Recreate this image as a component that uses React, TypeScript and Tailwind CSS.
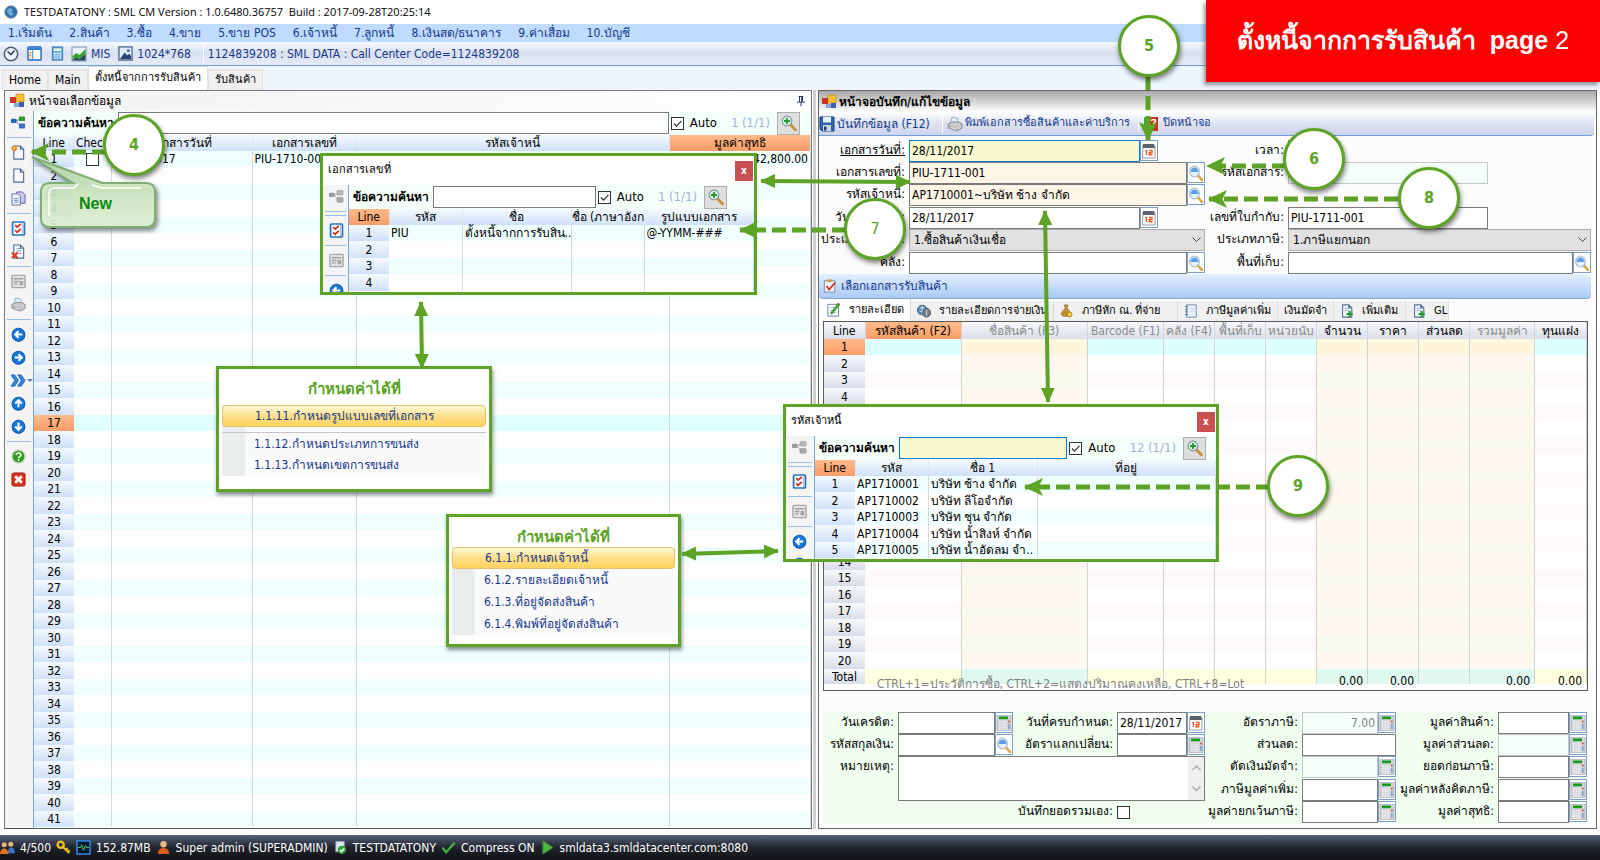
import type { ReactNode } from "react";

type IconName = keyof typeof ICONS;

const arrowDisc = (d: string) => (
  <>
    <circle cx="8" cy="8.4" r="7.2" fill="#0b4fa8" />
    <circle cx="8" cy="8" r="6.8" fill="#1878d8" stroke="#0d57b0" strokeWidth=".8" />
    <path d={d} fill="none" stroke="#fff" strokeWidth="2.2" />
  </>
);

const sheet = <path d="M3 1h7l3.5 3.5V15H3z M10 1v3.5h3.5" fill="#f7fbff" stroke="#4f6c98" strokeWidth="1.200" />;

const ICONS = {
  globe: (
    <>
      <circle cx="8" cy="8" r="7" fill="#2c6ea8" stroke="#5b7894" />
      <path d="M4 5l3-2 3 2-1 3 2 2-3 3-3-3-2-2z" fill="#6fa9d3" />
    </>
  ),
  clock: (
    <>
      <circle cx="8" cy="8" r="6.700" fill="#eef4fb" stroke="#4c5d73" strokeWidth="1.500" />
      <path d="M4.500 5.500L8 8.500l3.500-4" fill="none" stroke="#222f42" strokeWidth="1.300" />
    </>
  ),
  layout: (
    <>
      <rect x="1" y="1" width="14" height="14" rx="1" fill="#fff" stroke="#1b6ac2" strokeWidth="1.500" />
      <path d="M1 3h14" stroke="#2b83dc" strokeWidth="2.500" />
      <path d="M6 4v11" stroke="#2b83dc" />
      <path d="M3.500 6v7" stroke="#f08a24" strokeWidth="2" strokeDasharray="2 1" />
    </>
  ),
  bluecalc: (
    <>
      <rect x="2.500" y="1" width="11" height="14" fill="#5ba5df" stroke="#2f77b8" />
      <rect x="4" y="2.500" width="8" height="3" fill="#dff2d8" />
      <path d="M4 8h8M4 10.500h8M4 13h8" stroke="#fff" strokeWidth="1.400" strokeDasharray="2 1" />
    </>
  ),
  chart: (
    <>
      <rect x="1" y="1" width="14" height="14" fill="#e9f3fb" stroke="#7c93ab" />
      <path d="M1.500 10l4-3 3 2 6-6v5l-6 5-3-2-4 3z" fill="#35a52c" />
      <path d="M1.500 14l4-3 3 2 6-5v6.500h-13z" fill="#27465e" />
    </>
  ),
  picture: (
    <>
      <rect x="1" y="1" width="14" height="14" fill="#dfeaf7" stroke="#566f95" strokeWidth="1.500" />
      <path d="M2 14l5-7 3 3 2-2 2 3v3z" fill="#2c4677" />
      <circle cx="11" cy="5" r="1.500" fill="#3a5b94" />
    </>
  ),
  form: (
    <>
      <path d="M7 1h8v8H7z" fill="#f6bf35" stroke="#c98912" strokeWidth=".7" />
      <path d="M1 4h6v6H1z" fill="#cc3425" />
      <path d="M5 10h5v4H5z" fill="#8ca5d8" />
      <path d="M10 9h5v5h-5z" fill="#3c61b4" />
    </>
  ),
  tree: (
    <>
      <path d="M6 6l5-2M6 7l4 5" stroke="#7b8490" />
      <rect x="0" y="4" width="6" height="4.500" rx="1" fill="#2466b8" />
      <rect x="8.500" y="1.500" width="6.500" height="5" rx="1" fill="#2f9a36" />
      <rect x="8.500" y="9" width="6.500" height="5.500" rx="1" fill="#3c6fc0" />
    </>
  ),
  treeOff: (
    <>
      <path d="M6 6l5-2M6 7l4 5" stroke="#a4a4a4" />
      <rect x="0" y="4" width="6" height="4.500" rx="1" fill="#9c9c9c" />
      <rect x="8.500" y="1.500" width="6.500" height="5" rx="1" fill="#b9b9b9" stroke="#999" strokeWidth=".6" />
      <rect x="8.500" y="9" width="6.500" height="5" rx="1" fill="#aaa" stroke="#8f8f8f" strokeWidth=".6" />
    </>
  ),
  docNew: (
    <>
      {sheet}
      <circle cx="3.500" cy="3.500" r="3" fill="#f5872c" />
      <circle cx="3.500" cy="3.500" r="1.200" fill="#ffe28a" />
    </>
  ),
  doc: sheet,
  copy: (
    <>
      <path d="M6 1h6l3 3v9H6z" fill="#cfc4ee" stroke="#6a57a8" />
      <path d="M1 3h6l3 3v9H1z" fill="#eef3fc" stroke="#59719f" />
      <path d="M3 8h5M3 10h5M3 12h5" stroke="#7b93bd" />
    </>
  ),
  checks: (
    <>
      <rect x="1.500" y="1" width="13" height="14" rx="1" fill="#a9d0f2" stroke="#2c74b4" strokeWidth="1.500" />
      <rect x="3.500" y="2" width="8" height="12" fill="#fff" />
      <path d="M4.500 4.500l2 2 4-3.500M4.500 10l2 2 4-3.500" fill="none" stroke="#d4281c" strokeWidth="1.800" />
    </>
  ),
  docDelete: (
    <>
      {sheet}
      <path d="M6 5h4M6 7.500h5M8 10h3" stroke="#7f98bd" />
      <path d="M1 9l6 6M7 9l-6 6" stroke="#dd3a1e" strokeWidth="2.400" />
    </>
  ),
  panelOff: (
    <>
      <rect x="1" y="1.500" width="14" height="13" rx="1" fill="#e4e4e4" stroke="#a6a6a6" strokeWidth="1.500" />
      <path d="M3 5h10M3 8h5M3 10.500h4" stroke="#9f9f9f" strokeWidth="1.500" />
      <rect x="9" y="7.500" width="4" height="4.500" fill="#a5a5a5" />
    </>
  ),
  printer: (
    <>
      <path d="M5 1l6 1.500L10 8H3z" fill="#dff0fb" stroke="#8aa0b4" strokeWidth=".8" />
      <path d="M1 8l4-2h7l3 2v4l-5 3-9-3z" fill="#c9cbce" stroke="#72767c" strokeWidth=".8" />
      <path d="M1 9l9 3v3l-9-3z" fill="#a9acb1" />
      <path d="M4 11.500l5 1.500" stroke="#f6f6f6" />
    </>
  ),
  left: arrowDisc("M12 8H5M8 4.500L4.500 8 8 11.500"),
  right: arrowDisc("M4 8h7M8 4.500L11.500 8 8 11.500"),
  up: arrowDisc("M8 12V5M4.500 8L8 4.500 11.500 8"),
  down: arrowDisc("M8 4v7M4.500 8L8 11.500 11.500 8"),
  forward: (
    <path d="M0 2h4l4 6-4 6H0l4-6zM7 2h4l4 6-4 6H7l4-6z" fill="#2f86dc" stroke="#1b5fae" strokeWidth=".8" />
  ),
  help: (
    <>
      <circle cx="8" cy="8" r="7" fill="#2f9c20" stroke="#c9d9c5" strokeWidth="1.500" />
      <path d="M5.500 6.500c0-3 5-3 5 0 0 1.700-2.500 1.500-2.500 3.300M8 11v1.800" fill="none" stroke="#fff" strokeWidth="1.700" />
    </>
  ),
  close: (
    <>
      <rect x="1" y="1" width="14" height="14" rx="2" fill="#d8301c" stroke="#9e1c0c" />
      <path d="M4.500 4.500l7 7M11.500 4.500l-7 7" stroke="#fff" strokeWidth="3" />
    </>
  ),
  find: (
    <>
      <path d="M10 10.500l4 4.500" stroke="#dca73c" strokeWidth="2.600" strokeLinecap="round" />
      <ellipse cx="6.500" cy="6.500" rx="4.800" ry="5.500" fill="#e3f2fc" stroke="#a9b8c6" strokeWidth="1.200" />
      <path d="M2.700 7a3.800 4.500 0 0 1 7.600 0z" fill="#5d9fe6" />
    </>
  ),
  findPlus: (
    <>
      <path d="M9 9l5.500 6" stroke="#c9923a" strokeWidth="2.800" strokeLinecap="round" />
      <circle cx="6" cy="6" r="4.800" fill="#dff3e4" stroke="#7f97a4" strokeWidth="1.200" />
      <path d="M6 3v6M3 6h6" stroke="#1f9a2b" strokeWidth="1.800" />
    </>
  ),
  calendar: (
    <>
      <path d="M2 2l12 1v12H1.500z" fill="#fff" stroke="#8f9aa8" />
      <path d="M2 1h11l1 4H2z" fill="#5b626c" />
      <path d="M5.500 7v5M4.300 8.200l1.200-1.200M8 7.500h3v2.200H8.200v2h3.300" fill="none" stroke="#f05a28" strokeWidth="1.400" />
    </>
  ),
  calculator: (
    <>
      <rect x="1" y="0" width="14" height="16" fill="#d3d5d8" stroke="#aab0b8" />
      <rect x="3" y="1.500" width="9" height="2.700" fill="#159a1e" />
      <path d="M3 7h8M3 9.500h8M3 12h8M3 14.300h8" stroke="#f1f2f3" strokeWidth="1.300" strokeDasharray="1.600 1" />
      <path d="M12.800 9v5" stroke="#7f9bd0" strokeWidth="1.500" />
      <circle cx="12.800" cy="6.500" r=".9" fill="#e03c2c" />
    </>
  ),
  save: (
    <>
      <path d="M1 1h14v14H3l-2-2z" fill="#2c63b4" stroke="#1c3f7c" />
      <rect x="4" y="1" width="8" height="5.500" fill="#e6f1fb" />
      <rect x="4" y="9" width="8" height="6" fill="#cdd8e4" />
      <rect x="5" y="10.500" width="2.500" height="4" fill="#1c3f7c" />
    </>
  ),
  exit: (
    <>
      <path d="M1 1l5 2v12l-5-2z" fill="#39a23d" />
      <rect x="5" y="1" width="10" height="14" fill="#c8321e" />
      <path d="M8.500 5c0-2 4-2 4 0 0 1.500-2 1.500-2 3M10.500 10v2" stroke="#fff" fill="none" strokeWidth="1.500" />
    </>
  ),
  task: (
    <>
      <rect x="1.500" y="2" width="12" height="13" fill="#eaf0fa" stroke="#6d83ac" />
      <rect x="4.500" y=".5" width="6" height="3" fill="#c99a45" />
      <path d="M4 8l3 4 7-8" fill="none" stroke="#d8321e" strokeWidth="2" />
    </>
  ),
  edit: (
    <>
      <rect x="1" y="1.500" width="12" height="13.500" fill="#fff" stroke="#5f7898" />
      <path d="M3 5h6M3 8h4M3 11h8" stroke="#9fb3cc" />
      <path d="M14.500 2L7 11.500 4.500 13 5 10 12.500.5z" fill="#3fae35" stroke="#1f7a1c" strokeWidth=".6" />
      <path d="M12.500.5l2 1.500" stroke="#d8321e" strokeWidth="1.500" />
    </>
  ),
  money: (
    <>
      <circle cx="6" cy="7" r="5.500" fill="#4a8cc4" stroke="#37546e" />
      <path d="M6 2v10M3 4.500h6M3 8.500h6" stroke="#e4eef6" />
      <ellipse cx="11" cy="10" rx="4.500" ry="5" fill="#77808a" stroke="#454c55" />
      <path d="M11 6.500v7" stroke="#dde3e8" />
    </>
  ),
  bag: (
    <>
      <path d="M5 1h4l-1 4c4 3 5 8 1 9H4C0 13 2 8 6 5z" fill="#c38f2e" stroke="#7d5914" strokeWidth=".7" />
      <circle cx="11" cy="12" r="2.800" fill="#f3cf3c" stroke="#a17d12" />
    </>
  ),
  notebook: (
    <>
      <path d="M3 1h11v14H3z" fill="#e9f2fc" stroke="#5c7fb0" />
      <path d="M1.500 3h3M1.500 6h3M1.500 9h3M1.500 12h3" stroke="#2d4f80" />
      <path d="M7 5h5M7 8h5" stroke="#b9cce6" />
    </>
  ),
  docAdd: (
    <>
      {sheet}
      <path d="M5.500 5h4M5.500 7.500h5" stroke="#89a2c6" />
      <path d="M11 8v7M7.500 11.500h7" stroke="#209a24" strokeWidth="2.400" />
    </>
  ),
  users: (
    <>
      <circle cx="4.500" cy="5" r="2.700" fill="#e9b27c" />
      <path d="M0 15c0-8 9-8 9 0z" fill="#e2721c" />
      <circle cx="11.500" cy="4.500" r="2.700" fill="#e9b27c" />
      <path d="M8 14c0-8 8-8 8 0z" fill="#3f72c8" />
    </>
  ),
  key: (
    <>
      <circle cx="5" cy="5" r="3.300" fill="none" stroke="#f2c21c" strokeWidth="2.500" />
      <path d="M7 7l7 7M10.500 10.500l2-2M12.500 13l2-2" stroke="#f2c21c" strokeWidth="2.200" />
    </>
  ),
  monitor: (
    <>
      <rect x="1" y="1" width="14" height="14" fill="#06182b" stroke="#2c94e8" strokeWidth="1.500" />
      <path d="M2 8h3l1-3 2 6 2-5 1 2h3" fill="none" stroke="#57d36c" />
    </>
  ),
  user: (
    <>
      <circle cx="8" cy="4.500" r="3.400" fill="#eeb57d" />
      <path d="M2 15c0-9 12-9 12 0z" fill="#df5b1f" />
    </>
  ),
  database: (
    <>
      <path d="M3 1.500h9v11H3z" fill="#dfe9f3" stroke="#8ea2b6" />
      <circle cx="9.500" cy="10.500" r="4.500" fill="#2fa53a" />
      <path d="M7.500 10.500l1.500 2 3-3.500" fill="none" stroke="#fff" strokeWidth="1.500" />
    </>
  ),
  tick: <path d="M1.500 8l4 5 9-10" fill="none" stroke="#3fb23e" strokeWidth="2.500" />,
  play: <path d="M3 1l11 7-11 7z" fill="#56b548" stroke="#2f8428" />,
  pin: <path d="M5 2h6M6 2v7M10 2v7M9 2v7M3 9.500h10M8 10v5" stroke="#20306c" strokeWidth="1.300" />,
};

function Icon({ name, className = "size-4" }: { name: IconName; className?: string }) {
  return (
    <svg viewBox="0 0 16 16" className={`shrink-0 ${className}`} aria-hidden="true">
      {ICONS[name]}
    </svg>
  );
}

const MENU = [
  "1.เริ่มต้น", "2.สินค้า", "3.ซื้อ", "4.ขาย", "5.ขาย POS",
  "6.เจ้าหนี้", "7.ลูกหนี้", "8.เงินสด/ธนาคาร", "9.ค่าเสื่อม", "10.บัญชี",
];

const TOOL_GROUPS: IconName[][] = [
  ["tree"],
  ["docNew", "doc", "copy"],
  ["checks", "docDelete"],
  ["panelOff", "printer"],
  ["left", "right", "forward", "up", "down"],
  ["help", "close"],
];

// the empty group draws the second rule under the tree button
const POPUP_GROUPS: IconName[][] = [["treeOff"], [], ["checks"], ["panelOff"], ["left", "right"]];

function SideTools({ groups, width = "w-[29px]" }: { groups: IconName[][]; width?: string }) {
  return (
    <div className={`flex shrink-0 flex-col border-r border-[#7aa7e0] bg-[#f4f4f4] ${width}`}>
      {groups.map((group, i) => (
        <div
          key={i}
          className={`${i > 0 ? "mx-0.5 mt-[3px] border-t border-[#94bdf0]" : "mx-0.5"} ${
            i > 0 && group.length > 0 ? "pt-[3px]" : ""
          }`}
        >
          {group.map((name) => (
            <button
              key={name}
              type="button"
              aria-label={name}
              className="relative flex h-[23px] w-[22px] items-center justify-center"
            >
              <Icon name={name} className="size-[15px]" />
              {name === "forward" && (
                <span className="absolute -right-1 border-x-[3px] border-t-[3px] border-x-transparent border-t-[#5a78b4]" />
              )}
            </button>
          ))}
        </div>
      ))}
    </div>
  );
}

function SearchRow({
  id,
  count,
  inputClass,
  className,
}: {
  id: string;
  count: string;
  inputClass: string;
  className: string;
}) {
  return (
    <div className={`flex h-6 items-center bg-[#f5fffa] ${className}`}>
      <label htmlFor={id} className="shrink-0 font-bold whitespace-nowrap">
        ข้อความค้นหา
      </label>
      <input id={id} className={`ml-1 h-[22px] min-w-0 flex-1 border px-1 outline-none ${inputClass}`} />
      <label className="ml-0.5 flex shrink-0 items-center gap-1.5 text-[13px]">
        <CheckBox checked />
        Auto
      </label>
      <span className="ml-[14px] shrink-0 text-[13px] text-[#9db4d8]">{count}</span>
      <button
        type="button"
        aria-label="Find"
        className="ml-[7px] flex size-[23px] shrink-0 items-center justify-center border border-[#adadad] bg-[#dedede]"
      >
        <Icon name="findPlus" />
      </button>
    </div>
  );
}

function CheckBox({ checked, id, label }: { checked?: boolean; id?: string; label?: string }) {
  return (
    <span className="relative block size-[13px]">
      <input
        type="checkbox"
        id={id}
        aria-label={label}
        defaultChecked={checked}
        className="block size-[13px] appearance-none border border-[#333] bg-white"
      />
      {checked && (
        <svg viewBox="0 0 13 13" className="pointer-events-none absolute inset-0 size-[13px]">
          <path d="M3 6.500l2.500 2.700L10.500 3.800" fill="none" stroke="#333" strokeWidth="1.200" />
        </svg>
      )}
    </span>
  );
}

const headBlue = "bg-linear-to-b from-[#f4f9ff] to-[#cfe1f8]";
const headOrange = "bg-linear-to-b from-[#ffba8a] to-[#fb9d66]";

type Grid = {
  cols: string[];
  heads: string[];
  rows: number;
  hot: number;
  hotHead: number;
  data: ReactNode[][];
  lastRight?: boolean;
};

// Striped list shared by the main browser and the two look-up windows.
function ListGrid({ cols, heads, rows, hot, hotHead, data, lastRight }: Grid) {
  return (
    <table className="w-full table-fixed border-collapse leading-4">
      <colgroup>
        {cols.map((c, i) => (
          <col key={i} className={c} />
        ))}
      </colgroup>
      <thead>
        <tr className="h-4">
          {heads.map((h, i) => (
            <th
              key={h}
              className={`overflow-hidden border-r border-[#dbe6f4] p-0 font-normal whitespace-nowrap ${
                i === hotHead ? headOrange : headBlue
              }`}
            >
              <div className="h-4">{h}</div>
            </th>
          ))}
        </tr>
      </thead>
      <tbody>
        {Array.from({ length: rows }, (_, r) => (
          <tr
            key={r}
            className={`${r % 2 ? "h-[17px]" : "h-4"} ${
              r + 1 === hot ? "bg-[#e0ffff]" : r % 2 ? "bg-white" : "bg-[#f0ffff]"
            }`}
          >
            <td className={`p-0 text-center ${r + 1 === hot ? headOrange : headBlue}`}>{r + 1}</td>
            {heads.slice(1).map((h, i) => (
              <td
                key={h}
                className={`border-r border-[#d4d9dc] px-0.5 py-0 ${
                  lastRight && i === heads.length - 2 ? "text-right" : ""
                }`}
              >
                {data[r] && <div className="h-4 whitespace-nowrap">{data[r][i]}</div>}
              </td>
            ))}
          </tr>
        ))}
      </tbody>
    </table>
  );
}

function ListPanel() {
  return (
    <section className="flex w-[51%] shrink-0 border-r-[3px] border-[#cfcfcf] pr-px pl-1">
      <div className="flex min-w-0 flex-1 flex-col border border-b-[#555] border-[#777]">
        <header className="flex h-5 items-center gap-1 bg-linear-to-r from-[#f2f2f2] to-white px-1">
          <Icon name="form" />
          <h2>หน้าจอเลือกข้อมูล</h2>
          <Icon name="pin" className="ml-auto size-3" />
        </header>
        <div className="flex flex-1">
          <SideTools groups={TOOL_GROUPS} />
          <div className="min-w-0 flex-1">
            <SearchRow
              id="search-main"
              count="1 (1/1)"
              inputClass="border-[#7a7a7a] bg-white"
              className="pr-[11px] pl-1"
            />
            <ListGrid
              cols={["w-[40px]", "w-[37px]", "w-[141px]", "w-[104px]", "", "w-[141px]"]}
              heads={["Line", "Check", "เอกสารวันที่", "เอกสารเลขที่", "รหัสเจ้าหนี้", "มูลค่าสุทธิ"]}
              rows={41}
              hot={17}
              hotHead={5}
              lastRight
              data={[
                [
                  <span className="flex h-4 items-center justify-center">
                    <CheckBox label="Check line 1" />
                  </span>,
                  "28/10/2017",
                  "PIU-1710-001",
                  "",
                  "42,800.00",
                ],
              ]}
            />
          </div>
        </div>
      </div>
    </section>
  );
}

const PALE = "border-[#c4c9c6] bg-[#f5fffa]";

function Field({
  id,
  label,
  value = "",
  icon,
  width = "w-full",
  tone = "border-[#7a7a7a] bg-white",
  underline,
}: {
  id: string;
  label: string;
  value?: string;
  icon?: IconName;
  width?: string;
  tone?: string;
  underline?: boolean;
}) {
  return (
    <>
      <label
        htmlFor={id}
        className={`pr-1 text-right leading-5 whitespace-nowrap ${underline ? "underline" : ""}`}
      >
        {label}:
      </label>
      <div className={`flex h-[22px] min-w-0 ${width}`}>
        <input
          id={id}
          defaultValue={value}
          className={`min-w-0 flex-1 border px-0.5 outline-none ${tone}`}
        />
        {icon && (
          <button
            type="button"
            aria-label={`${label} ${icon}`}
            className="flex h-[21px] w-[18px] items-center justify-center border border-[#7d9fc6] bg-white"
          >
            <Icon name={icon} />
          </button>
        )}
      </div>
    </>
  );
}

function SelectField({ id, label, value }: { id: string; label: string; value: string }) {
  return (
    <>
      <label htmlFor={id} className="pr-1 text-right leading-5 whitespace-nowrap">
        {label}:
      </label>
      <div className="relative h-[22px]">
        <select
          id={id}
          className="block h-[22px] w-full appearance-none border border-[#adadad] bg-[#e1e1e1] px-1 outline-none"
        >
          <option>{value}</option>
        </select>
        <svg viewBox="0 0 9 6" className="pointer-events-none absolute top-2 right-1 h-1.5 w-[9px]">
          <path d="M.5 .5l4 4 4-4" fill="none" stroke="#444" />
        </svg>
      </div>
    </>
  );
}

const DETAIL_TABS: { label: string; icon?: IconName; width: string }[] = [
  { label: "รายละเอียด", icon: "edit", width: "w-[90px]" },
  { label: "รายละเอียดการจ่ายเงิน", icon: "money", width: "w-[143px]" },
  { label: "ภาษีหัก ณ. ที่จ่าย", icon: "bag", width: "w-[124px]" },
  { label: "ภาษีมูลค่าเพิ่ม", icon: "notebook", width: "w-[100px]" },
  { label: "เงินมัดจำ", width: "w-[56px]" },
  { label: "เพิ่มเติม", icon: "docAdd", width: "w-[72px]" },
  { label: "GL", icon: "docAdd", width: "w-[43px]" },
];

const DETAIL_COLS = [
  { head: "Line", w: "w-[41px]" },
  { head: "รหัสสินค้า (F2)", w: "w-[96px]", hot: true },
  { head: "ชื่อสินค้า (F3)", w: "", dim: true, fixed: true },
  { head: "Barcode (F1)", w: "w-[76px]", dim: true },
  { head: "คลัง (F4)", w: "w-[51px]", dim: true },
  { head: "พื้นที่เก็บ", w: "w-[51px]", dim: true },
  { head: "หน่วยนับ", w: "w-[51px]", dim: true },
  { head: "จำนวน", w: "w-[51px]", fixed: true, total: true },
  { head: "ราคา", w: "w-[51px]", fixed: true, total: true },
  { head: "ส่วนลด", w: "w-[51px]", fixed: true },
  { head: "รวมมูลค่า", w: "w-[65px]", dim: true, fixed: true, total: true },
  { head: "ทุนแฝง", w: "w-[52px]", total: true },
];

const headGray = "bg-linear-to-b from-[#f7f8fb] to-[#d9dde8]";

function cellTone(row: number, fixed?: boolean) {
  if (row === 0) return fixed ? "bg-[#fff5dc]" : "bg-[#dcffff]";
  if (fixed) return row % 2 ? "bg-[#fff8f0]" : "bg-[#fafaf0]";
  return row % 2 ? "bg-white" : "bg-[#fffafa]";
}

function DetailGrid() {
  return (
    <div className="relative mr-2 ml-1 h-[370px] overflow-hidden border border-[#5a5a5a] bg-white">
      <table className="w-full table-fixed border-collapse leading-4">
        <colgroup>
          {DETAIL_COLS.map((c) => (
            <col key={c.head} className={c.w} />
          ))}
        </colgroup>
        <thead>
          <tr className="h-[17px]">
            {DETAIL_COLS.map((c) => (
              <th
                key={c.head}
                className={`border-r border-[#d2d6de] p-0 font-normal whitespace-nowrap ${
                  c.hot ? headOrange : headGray
                } ${c.dim ? "text-[#8a8a8a]" : ""}`}
              >
                <div className="h-4">{c.head}</div>
              </th>
            ))}
          </tr>
        </thead>
        <tbody>
          {Array.from({ length: 20 }, (_, r) => (
            <tr key={r} className={r % 2 ? "h-[17px]" : "h-4"}>
              {DETAIL_COLS.map((c, i) =>
                i === 0 ? (
                  <td key={c.head} className={`p-0 text-center ${r === 0 ? headOrange : headGray}`}>
                    {r + 1}
                  </td>
                ) : (
                  <td key={c.head} className={`border-r border-[#d2d2d2] p-0 ${cellTone(r, c.fixed)}`} />
                ),
              )}
            </tr>
          ))}
          <tr className="h-[15px]">
            {DETAIL_COLS.map((c, i) => (
              <td
                key={c.head}
                className={`p-0 ${
                  i === 0
                    ? `text-center ${headGray}`
                    : `border-r border-[#d2d2d2] pr-1 text-right leading-6 ${
                        c.fixed ? "bg-[#dff8f0]" : "bg-[#ffffe0]"
                      }`
                }`}
              >
                <div className="h-[15px]">{i === 0 ? "Total" : c.total ? "0.00" : ""}</div>
              </td>
            ))}
          </tr>
        </tbody>
      </table>
      <p className="absolute bottom-0 left-[53px] leading-3 whitespace-nowrap text-[#808080]">
        CTRL+1=ประวัติการซื้อ, CTRL+2=แสดงปริมาณคงเหลือ, CTRL+8=Lot
      </p>
    </div>
  );
}

function TotalsForm() {
  return (
    <form className="mr-[9px] ml-1 mt-[21px] grid grid-cols-[75px_115fr_104px_88fr_97px_94fr_102px_89fr] grid-rows-[22px_22px_23px_22px_22px] bg-[#f0fff0]">
      <Field id="credit" label="วันเครดิต" icon="calculator" />
      <Field id="due" label="วันที่ครบกำหนด" value="28/11/2017" icon="calendar" />
      <Field id="vat-rate" label="อัตราภาษี" value="7.00" icon="calculator" tone={`${PALE} text-right text-[#808080]`} />
      <Field id="amount" label="มูลค่าสินค้า" icon="calculator" />

      <Field id="currency" label="รหัสสกุลเงิน" icon="find" />
      <Field id="exchange" label="อัตราแลกเปลี่ยน" icon="calculator" />
      <Field id="discount" label="ส่วนลด" />
      <Field id="discount-amount" label="มูลค่าส่วนลด" icon="calculator" tone={PALE} />

      <label htmlFor="remark" className="row-span-2 pr-1 text-right leading-5">
        หมายเหตุ:
      </label>
      <div className="relative col-span-3 row-span-2 h-[45px]">
        <textarea
          id="remark"
          className="block h-[45px] w-full resize-none border border-[#7a7a7a] bg-white p-1 outline-none"
        />
        <div className="absolute inset-y-px right-px flex w-4 flex-col items-center justify-between bg-[#f0f0f0] py-2">
          <svg viewBox="0 0 9 6" className="h-1.5 w-[9px]">
            <path d="M.5 5l4-4 4 4" fill="none" stroke="#aaa" strokeWidth="1.500" />
          </svg>
          <svg viewBox="0 0 9 6" className="h-1.5 w-[9px]">
            <path d="M.5 .5l4 4 4-4" fill="none" stroke="#aaa" strokeWidth="1.500" />
          </svg>
        </div>
      </div>
      <Field id="deposit" label="ตัดเงินมัดจำ" icon="calculator" tone={PALE} />
      <Field id="before-vat" label="ยอดก่อนภาษี" icon="calculator" />
      <Field id="vat" label="ภาษีมูลค่าเพิ่ม" icon="calculator" />
      <Field id="after-vat" label="มูลค่าหลังคิดภาษี" icon="calculator" />

      <label htmlFor="manual" className="col-span-3 pr-1 text-right leading-5">
        บันทึกยอดรวมเอง:
      </label>
      <div className="flex items-center">
        <CheckBox id="manual" />
      </div>
      <Field id="exempt" label="มูลค่ายกเว้นภาษี" icon="calculator" />
      <Field id="net" label="มูลค่าสุทธิ" icon="calculator" />
    </form>
  );
}

function EntryPanel() {
  const cream = "border-[#7a7a7a] bg-[#fdf5e6]";
  return (
    <section className="mr-[3px] ml-0.5 flex min-w-0 flex-1 flex-col border border-[#666] bg-[#fcfcfc]">
      <header className="flex h-[21px] items-center gap-0.5 bg-linear-to-b from-[#a8a8a8] to-white px-0.5">
        <Icon name="form" />
        <h2 className="font-bold">หน้าจอบันทึก/แก้ไขข้อมูล</h2>
      </header>
      <div className="mr-0.5 flex h-6 items-center rounded-br border-b border-[#6f9fdc] bg-linear-to-b from-white via-[#dde3f1] to-[#ccd5ea] text-[#15388a]">
        <button type="button" className="flex items-center gap-0.5 border-r border-white pr-3">
          <Icon name="save" />
          บันทึกข้อมูล (F12)
        </button>
        <button type="button" className="flex items-center gap-0.5 border-r border-white pr-2 pl-1 text-[11px]">
          <Icon name="printer" />
          พิมพ์เอกสารซื้อสินค้าและค่าบริการ
        </button>
        <button type="button" className="flex items-center gap-1 px-1 text-[11px]">
          <Icon name="exit" />
          ปิดหน้าจอ
        </button>
      </div>
      <form className="mr-[5px] grid grid-cols-[90px_296fr_83px_303fr] grid-rows-[22px_22px_23px_22px_23px_22px] pt-1">
        <Field id="doc-date" label="เอกสารวันที่" value="28/11/2017" icon="calendar" width="w-[84%]" tone="border-[#0a78d7] bg-[#fafad2]" underline />
        <Field id="doc-time" label="เวลา" width="w-[16%]" />
        <Field id="doc-no" label="เอกสารเลขที่" value="PIU-1711-001" icon="find" tone={cream} />
        <Field id="doc-code" label="รหัสเอกสาร" width="w-[66%]" tone={PALE} />
        <Field id="vendor" label="รหัสเจ้าหนี้" value="AP1710001~บริษัท ช้าง จำกัด" icon="find" tone={cream} />
        <div className="col-span-2" />
        <Field id="tax-date" label="วันที่ใบกำกับ" value="28/11/2017" icon="calendar" width="w-[84%]" />
        <Field id="tax-no" label="เลขที่ใบกำกับ" value="PIU-1711-001" width="w-[66%]" />
        <SelectField id="doc-type" label="ประเภทรายการ" value="1.ซื้อสินค้าเงินเชื่อ" />
        <SelectField id="tax-type" label="ประเภทภาษี" value="1.ภาษีแยกนอก" />
        <Field id="warehouse" label="คลัง" icon="find" />
        <Field id="shelf" label="พื้นที่เก็บ" icon="find" />
      </form>
      <button
        type="button"
        className="mr-[5px] flex h-[25px] items-center gap-1 rounded border-b border-[#7fa8dc] bg-linear-to-b from-[#e3efff] to-[#a9caf4] px-1 text-[#15388a]"
      >
        <Icon name="task" className="size-3.5" />
        เลือกเอกสารรับสินค้า
      </button>
      <nav className="ml-0.5 flex h-[22px] items-end">
        {DETAIL_TABS.map((t, i) => (
          <button
            key={t.label}
            type="button"
            className={`flex items-center gap-2 border-r border-[#dcdcdc] pl-1.5 text-[11px] whitespace-nowrap ${t.width} ${
              i === 0 ? "h-[22px] bg-white" : "h-5 bg-[#f0f0f0]"
            }`}
          >
            {t.icon && <Icon name={t.icon} className="size-3.5" />}
            {t.label}
          </button>
        ))}
      </nav>
      <DetailGrid />
      <TotalsForm />
    </section>
  );
}

function LookupWindow({
  title,
  className,
  tools,
  children,
}: {
  title: string;
  className: string;
  tools?: string;
  children: ReactNode;
}) {
  return (
    <div className={`absolute overflow-hidden border-[3px] border-[#5ca326] bg-white ${className}`}>
      <div className="flex h-[29px] items-center justify-between pl-[5px]">
        <span className="text-[11px]">{title}</span>
        <button
          type="button"
          aria-label="Close"
          className="mr-px flex h-5 w-[18px] items-center justify-center bg-[#c75050] text-[10px] font-bold text-white"
        >
          x
        </button>
      </div>
      <div className="flex">
        <SideTools groups={POPUP_GROUPS} width={tools} />
        <div className="min-w-0 flex-1">{children}</div>
      </div>
    </div>
  );
}

function HintMenu({
  className,
  items,
  divider,
}: {
  className: string;
  items: string[];
  divider?: boolean;
}) {
  return (
    <div
      className={`absolute border-[3px] border-[#5ca326] bg-white px-[3px] shadow-[1px_3px_4px_rgba(0,0,0,0.45)] ${className}`}
    >
      <h3
        className={`text-center text-[15px] leading-5 font-bold text-[#5ca326] ${divider ? "mb-1.5" : ""}`}
      >
        กำหนดค่าได้ที่
      </h3>
      <ul className="bg-linear-to-r from-[#e9edee] from-[23px] to-[#fafafa] to-[23px] text-[#15388a]">
        {items.map((item, i) => (
          <li
            key={item}
            className={`flex h-[22px] items-center pl-8 whitespace-nowrap ${
              i === 0
                ? "rounded-sm border border-[#e6c06a] bg-linear-to-b from-[#fff8d5] via-[#ffdf8a] to-[#ffd35c]"
                : ""
            } ${divider && i === 1 ? "mt-[5px] border-t border-[#c5c5c5]" : ""}`}
          >
            {item}
          </li>
        ))}
      </ul>
    </div>
  );
}

function Step({ n, className }: { n: number; className: string }) {
  return (
    <div
      className={`absolute flex size-[62px] items-center justify-center rounded-full border-[3px] border-[#5ca326] bg-white text-base text-[#5ca326] shadow-[1px_3px_5px_rgba(0,0,0,0.5)] ${className}`}
    >
      {n}
    </div>
  );
}

function Arrows() {
  return (
    <svg className="absolute inset-0 size-full" aria-hidden="true">
      <defs>
        <marker id="head" markerUnits="userSpaceOnUse" markerWidth="20" markerHeight="20" refX="18" refY="9" orient="auto-start-reverse">
          <path d="M0 0L19 9 0 18 4.500 9z" fill="#5ca326" />
        </marker>
        <marker id="solid" markerUnits="userSpaceOnUse" markerWidth="16" markerHeight="16" refX="14" refY="7" orient="auto-start-reverse">
          <path d="M0 0L15 7 0 14z" fill="#5ca326" />
        </marker>
      </defs>
      <g stroke="#5ca326" strokeWidth="5" strokeDasharray="14 6" markerEnd="url(#head)">
        <path d="M106 152H31" />
        <path d="M1148 76V140" />
        <path d="M1286 166H1207" />
        <path d="M1398 199H1209" />
        <path d="M846 230H740" />
        <path d="M1270 487H1025" />
      </g>
      <g stroke="#5ca326" strokeWidth="4" markerStart="url(#solid)" markerEnd="url(#solid)">
        <path d="M761 181L910 182" />
        <path d="M421 302L422 368" />
        <path d="M1045 211L1048 402" />
        <path d="M682 554L778 551" />
      </g>
    </svg>
  );
}

function Annotations() {
  return (
    <div className="absolute inset-0 overflow-hidden">
      <LookupWindow
        title="เอกสารเลขที่"
        tools="w-[26px]"
        className="top-[153px] left-[320px] h-[142px] w-[437px]"
      >
        <SearchRow
          id="search-doc"
          count="1 (1/1)"
          inputClass="border-[#7a7a7a] bg-white"
          className="pr-[27px] pl-1"
        />
        <ListGrid
          cols={["w-[40px]", "w-[73px]", "w-[109px]", "w-[73px]", ""]}
          heads={["Line", "รหัส", "ชื่อ", "ชื่อ (ภาษาอังก", "รูปแบบเอกสาร"]}
          rows={4}
          hot={0}
          hotHead={0}
          data={[["PIU", "ตั้งหนี้จากการรับสิน..", "", "@-YYMM-###"]]}
        />
      </LookupWindow>

      <LookupWindow title="รหัสเจ้าหนี้" className="top-[404px] left-[783px] h-[158px] w-[436px]">
        <SearchRow
          id="search-vendor"
          count="12 (1/1)"
          inputClass="border-[#0a78d7] bg-[#fafad2]"
          className="pr-[10px] pl-1"
        />
        <ListGrid
          cols={["w-[40px]", "w-[73px]", "w-[109px]", ""]}
          heads={["Line", "รหัส", "ชื่อ 1", "ที่อยู่"]}
          rows={5}
          hot={0}
          hotHead={0}
          data={[
            ["AP1710001", "บริษัท ช้าง จำกัด", ""],
            ["AP1710002", "บริษัท ลีโอจำกัด", ""],
            ["AP1710003", "บริษัท ชุน จำกัด", ""],
            ["AP1710004", "บริษัท น้ำสิงห์ จำกัด", ""],
            ["AP1710005", "บริษัท น้ำอัดลม จำ..", ""],
          ]}
        />
      </LookupWindow>

      <HintMenu
        className="top-[366px] left-[216px] h-[126px] w-[276px] pt-2.5"
        items={["1.1.11.กำหนดรูปแบบเลขที่เอกสาร", "1.1.12.กำหนดประเภทการขนส่ง", "1.1.13.กำหนดเขตการขนส่ง"]}
        divider
      />
      <HintMenu
        className="top-[514px] left-[446px] h-[133px] w-[235px] pt-2.5"
        items={["6.1.1.กำหนดเจ้าหนี้", "6.1.2.รายละเอียดเจ้าหนี้", "6.1.3.ที่อยู่จัดส่งสินค้า", "6.1.4.พิมพ์ที่อยู่จัดส่งสินค้า"]}
      />

      <Arrows />
      <Step n={4} className="top-[114px] left-[103px] font-bold" />
      <Step n={5} className="top-[15px] left-[1118px] font-bold" />
      <Step n={6} className="top-[128px] left-[1283px] font-bold" />
      <Step n={7} className="top-[198px] left-[844px]" />
      <Step n={8} className="top-[167px] left-[1398px] font-bold" />
      <Step n={9} className="top-[455px] left-[1267px] font-bold" />

      <svg viewBox="0 0 130 80" className="absolute top-[154px] left-[30px] h-[80px] w-[130px] drop-shadow-[2px_3px_2px_rgba(0,0,0,0.5)]">
        <defs>
          <linearGradient id="glass" x2="0" y2="1">
            <stop offset="0" stopColor="#b5dba9" />
            <stop offset=".6" stopColor="#dcf6cd" />
            <stop offset="1" stopColor="#ecffe0" />
          </linearGradient>
        </defs>
        <path
          d="M2 3L72 29H116Q125 29 125 38V64Q125 73 116 73H20Q11 73 11 64V38Q11 29 20 29H43Z"
          fill="url(#glass)"
          fillOpacity=".85"
          stroke="#7fae71"
          strokeWidth="2"
        />
        <path d="M19 62V40Q19 34 25 34H44L48 30M62 31L72 34H112" fill="none" stroke="#fff" strokeWidth="1.500" />
      </svg>
      <strong className="absolute top-[192px] left-[79px] font-['Liberation_Sans'] text-base text-[#0a8a14]">
        New
      </strong>

      <div className="absolute top-0 right-0 flex h-[82px] w-[394px] items-center justify-center bg-[#fe0000] font-['Liberation_Sans',sans-serif] text-[25px] font-bold whitespace-pre text-white shadow-[-2px_3px_4px_rgba(0,0,0,0.4)]">
        ตั้งหนี้จากการรับสินค้า  page <span className="font-normal">2</span>
      </div>
    </div>
  );
}

function StatusBar() {
  const items: [IconName, string][] = [
    ["users", "4/500"],
    ["key", ""],
    ["monitor", "152.87MB"],
    ["user", "Super admin (SUPERADMIN)"],
    ["database", "TESTDATATONY"],
    ["tick", "Compress ON"],
    ["play", "smldata3.smldatacenter.com:8080"],
  ];
  return (
    <footer className="flex h-[25px] items-center gap-[5px] bg-linear-to-b from-[#56627e] via-[#20242e] to-[#101114] text-white">
      {items.map(([icon, text]) => (
        <span key={icon} className="flex items-center gap-[5px]">
          <Icon name={icon} className="size-[15px]" />
          {text}
        </span>
      ))}
    </footer>
  );
}

export default function App() {
  return (
    <div className="relative flex min-h-screen flex-col overflow-hidden bg-[#eff6ff] font-['DejaVu_Sans_Condensed','Noto_Sans',sans-serif] text-[12px] text-black">
      <header className="flex h-6 items-center gap-1.5 bg-white px-1 font-['Open_Sans','Noto_Sans',sans-serif]">
        <Icon name="globe" className="size-3.5" />
        <h1 className="text-[11px] whitespace-pre">
          TESTDATATONY : SML CM Version : 1.0.6480.36757  Build : 2017-09-28T20:25:14
        </h1>
      </header>
      <nav className="flex h-[18px] items-center gap-[17px] bg-[#bfdbff] px-2 text-[#15388a]">
        {MENU.map((m) => (
          <button key={m} type="button" className="whitespace-nowrap">
            {m}
          </button>
        ))}
      </nav>
      <div className="flex h-[24px] items-center gap-1.5 border-b border-[#6f9fdc] bg-linear-to-b from-[#f6f9ff] via-[#d9e0f0] to-[#e6ebf8] px-[3px] text-[#15388a]">
        <Icon name="clock" />
        <Icon name="layout" className="ml-0.5 size-[15px]" />
        <Icon name="bluecalc" className="ml-0.5 size-[15px]" />
        <button type="button" className="flex items-center gap-1">
          <Icon name="chart" />
          MIS
        </button>
        <button type="button" className="ml-0.5 flex items-center gap-1">
          <Icon name="picture" className="size-[15px]" />
          1024*768
        </button>
        <span className="ml-1.5 border-l border-white pl-1 whitespace-pre">
          1124839208 : SML DATA : Call Center Code=1124839208
        </span>
      </div>
      <nav className="flex h-6 items-end pl-0.5">
        {["Home", "Main", "ตั้งหนี้จากการรับสินค้า", "รับสินค้า"].map((t, i) => (
          <button
            key={t}
            type="button"
            className={`border-x border-t border-[#e0e0e0] whitespace-nowrap ${
              i > 1 ? "px-1.5 text-[11px]" : "px-1.5"
            } ${i === 2 ? "h-6 bg-white" : "h-[21px] bg-[#f0f0f0]"}`}
          >
            {t}
          </button>
        ))}
      </nav>
      <main className="flex flex-1 bg-white pb-1.5">
        <ListPanel />
        <EntryPanel />
      </main>
      <StatusBar />
      <Annotations />
    </div>
  );
}
